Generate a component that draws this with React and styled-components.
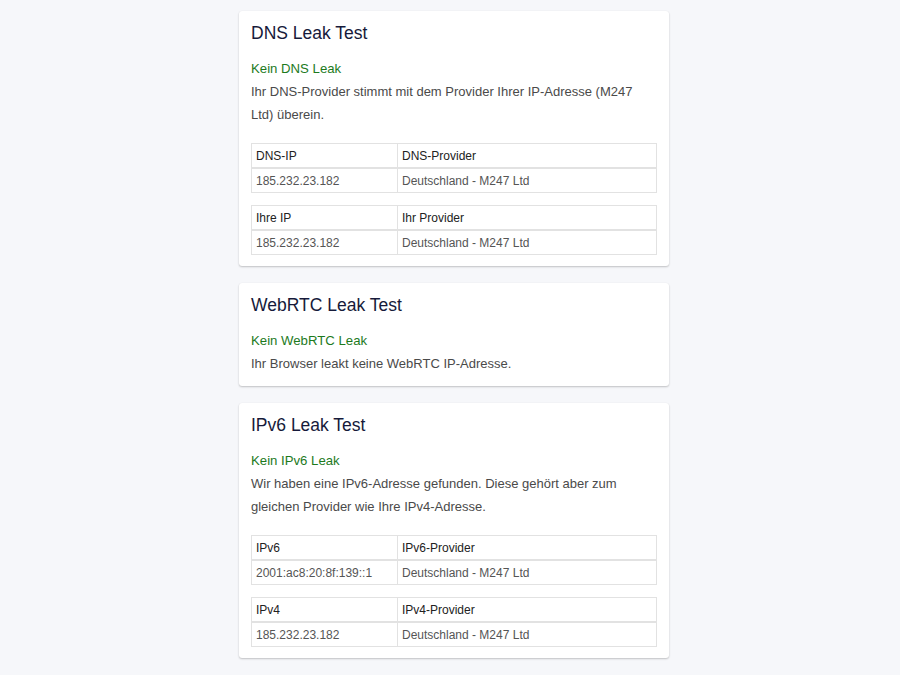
import React from "react";
import styled, { createGlobalStyle } from "styled-components";

const GlobalStyle = createGlobalStyle`
  body {
    margin: 0;
    background: #f6f7fa;
    font-family: "Liberation Sans", Arial, sans-serif;
  }
`;

const Page = styled.div`
  display: flex;
  flex-direction: column;
  align-items: center;
  gap: 17px;
  padding: 11px 0 15px 8px;
`;

const Card = styled.section`
  width: 430px;
  box-sizing: border-box;
  background: #fff;
  border-radius: 3px;
  padding: 10px 12px 11px;
  box-shadow: 0 1px 2px rgba(0, 0, 0, 0.22), 0 0 1px rgba(0, 0, 0, 0.06);
`;

const Title = styled.h2`
  margin: 0 0 12px;
  font-size: 17.5px;
  line-height: 24px;
  font-weight: 400;
  color: #161a3a;
`;

const Status = styled.div`
  font-size: 13.2px;
  line-height: 23px;
  color: #1d7a1d;
`;

const Text = styled.p`
  margin: 0;
  font-size: 13px;
  line-height: 23px;
  color: #4a4a4a;
`;

const Tables = styled.div`
  display: flex;
  flex-direction: column;
  gap: 12px;
  margin-top: 17px;
`;

const Table = styled.table`
  width: 100%;
  border-collapse: collapse;
  font-size: 12px;
  table-layout: fixed;
`;

const Cell = styled.td`
  border: 1px solid #e2e2e2;
  padding: 0 4px;
  height: 23px;
  color: ${(p) => (p.$head ? "#222" : "#555")};
  width: ${(p) => (p.$first ? "137px" : "auto")};
  ${(p) => p.$head && "border-bottom: 2px solid #e2e2e2;"}
`;

function InfoTable({ head, row }) {
  return (
    <Table>
      <tbody>
        <tr>
          <Cell $head $first>{head[0]}</Cell>
          <Cell $head>{head[1]}</Cell>
        </tr>
        <tr>
          <Cell $first>{row[0]}</Cell>
          <Cell>{row[1]}</Cell>
        </tr>
      </tbody>
    </Table>
  );
}

export default function App() {
  return (
    <>
      <GlobalStyle />
      <Page>
        <Card>
          <Title>DNS Leak Test</Title>
          <Status>Kein DNS Leak</Status>
          <Text>
            Ihr DNS-Provider stimmt mit dem Provider Ihrer IP-Adresse (M247
            Ltd) überein.
          </Text>
          <Tables>
            <InfoTable
              head={["DNS-IP", "DNS-Provider"]}
              row={["185.232.23.182", "Deutschland - M247 Ltd"]}
            />
            <InfoTable
              head={["Ihre IP", "Ihr Provider"]}
              row={["185.232.23.182", "Deutschland - M247 Ltd"]}
            />
          </Tables>
        </Card>
        <Card>
          <Title>WebRTC Leak Test</Title>
          <Status>Kein WebRTC Leak</Status>
          <Text>Ihr Browser leakt keine WebRTC IP-Adresse.</Text>
        </Card>
        <Card>
          <Title>IPv6 Leak Test</Title>
          <Status>Kein IPv6 Leak</Status>
          <Text>
            Wir haben eine IPv6-Adresse gefunden. Diese gehört aber zum
            gleichen Provider wie Ihre IPv4-Adresse.
          </Text>
          <Tables>
            <InfoTable
              head={["IPv6", "IPv6-Provider"]}
              row={["2001:ac8:20:8f:139::1", "Deutschland - M247 Ltd"]}
            />
            <InfoTable
              head={["IPv4", "IPv4-Provider"]}
              row={["185.232.23.182", "Deutschland - M247 Ltd"]}
            />
          </Tables>
        </Card>
      </Page>
    </>
  );
}
